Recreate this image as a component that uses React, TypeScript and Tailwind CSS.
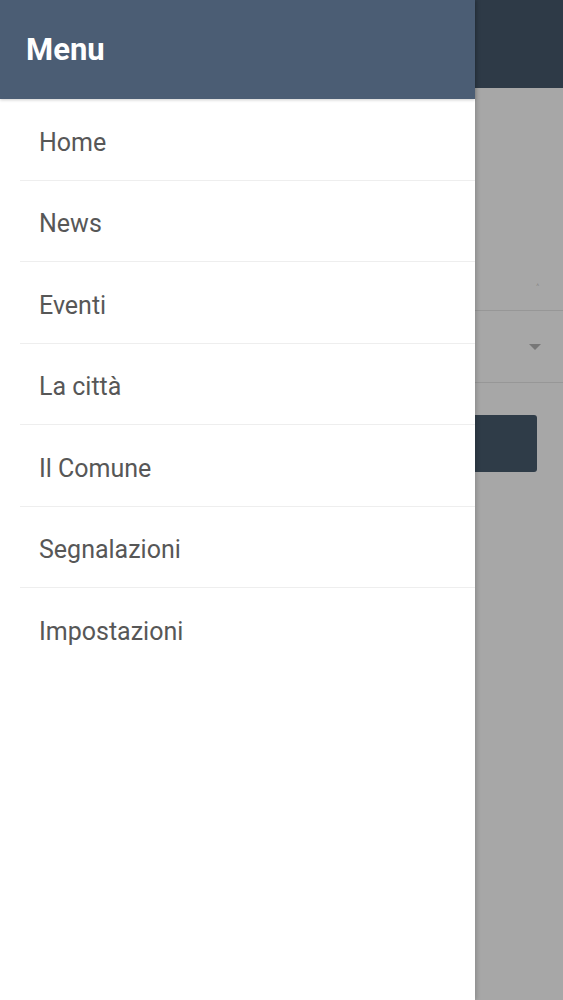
import React from 'react';

const menuItems = ['Home', 'News', 'Eventi', 'La città', 'Il Comune', 'Segnalazioni', 'Impostazioni'];

const App: React.FC = () => {
  return (
    <div className="relative h-[1000px] w-[563px] overflow-hidden bg-[#a7a7a7]" style={{ fontFamily: 'Roboto, "Noto Sans", sans-serif' }}>
      {/* Page behind the overlay */}
      <div className="flex flex-col">
        <div className="h-[88px] bg-[#2e3a47]"></div>
        <div className="flex h-[222px] items-end justify-end pb-4 pr-6">
          <span className="text-[10px] leading-none text-[#777]">˄</span>
        </div>
        <div className="h-px bg-[#979797]"></div>
        <div className="flex h-[71px] items-center justify-end pr-[22px]">
          <div className="h-0 w-0 border-x-[6px] border-t-[6px] border-x-transparent border-t-[#777]"></div>
        </div>
        <div className="h-px bg-[#979797]"></div>
        <div className="ml-[400px] mt-[32px] h-[57px] w-[137px] rounded-[3px] bg-[#2f3c48]"></div>
      </div>

      {/* Drawer */}
      <div className="absolute inset-y-0 left-0 flex w-[475px] flex-col bg-white shadow-[2px_0_4px_rgba(0,0,0,0.15)]">
        <div className="flex h-[99px] items-center bg-[#4b5d74] pl-[26px] shadow-[0_1px_3px_rgba(0,0,0,0.2)]">
          <h1 className="text-[31px] font-bold leading-none text-white">Menu</h1>
        </div>
        <ul className="flex flex-col pl-[20px]">
          {menuItems.map((item, i) => (
            <li
              key={item}
              className={`flex h-[81.5px] items-center pl-[19px] pt-[6px] text-[25px] leading-none text-[#575757] ${i < menuItems.length - 1 ? 'border-b border-[#eeeeee]' : ''}`}
            >
              {item}
            </li>
          ))}
        </ul>
      </div>
    </div>
  );
};

export default App;
